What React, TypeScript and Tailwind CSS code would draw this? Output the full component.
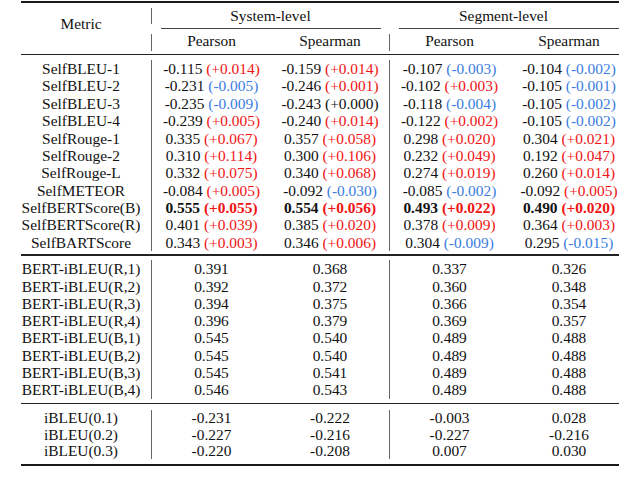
import React from 'react';

type Cell = string | [string, string];

const sectionOne: { name: string; bold?: boolean; cells: [string, string][] }[] = [
  { name: 'SelfBLEU-1', cells: [['-0.115', '+0.014'], ['-0.159', '+0.014'], ['-0.107', '-0.003'], ['-0.104', '-0.002']] },
  { name: 'SelfBLEU-2', cells: [['-0.231', '-0.005'], ['-0.246', '+0.001'], ['-0.102', '+0.003'], ['-0.105', '-0.001']] },
  { name: 'SelfBLEU-3', cells: [['-0.235', '-0.009'], ['-0.243', '+0.000'], ['-0.118', '-0.004'], ['-0.105', '-0.002']] },
  { name: 'SelfBLEU-4', cells: [['-0.239', '+0.005'], ['-0.240', '+0.014'], ['-0.122', '+0.002'], ['-0.105', '-0.002']] },
  { name: 'SelfRouge-1', cells: [['0.335', '+0.067'], ['0.357', '+0.058'], ['0.298', '+0.020'], ['0.304', '+0.021']] },
  { name: 'SelfRouge-2', cells: [['0.310', '+0.114'], ['0.300', '+0.106'], ['0.232', '+0.049'], ['0.192', '+0.047']] },
  { name: 'SelfRouge-L', cells: [['0.332', '+0.075'], ['0.340', '+0.068'], ['0.274', '+0.019'], ['0.260', '+0.014']] },
  { name: 'SelfMETEOR', cells: [['-0.084', '+0.005'], ['-0.092', '-0.030'], ['-0.085', '-0.002'], ['-0.092', '+0.005']] },
  { name: 'SelfBERTScore(B)', bold: true, cells: [['0.555', '+0.055'], ['0.554', '+0.056'], ['0.493', '+0.022'], ['0.490', '+0.020']] },
  { name: 'SelfBERTScore(R)', cells: [['0.401', '+0.039'], ['0.385', '+0.020'], ['0.378', '+0.009'], ['0.364', '+0.003']] },
  { name: 'SelfBARTScore', cells: [['0.343', '+0.003'], ['0.346', '+0.006'], ['0.304', '-0.009'], ['0.295', '-0.015']] },
];

const sectionTwo: [string, string[]][] = [
  ['BERT-iBLEU(R,1)', ['0.391', '0.368', '0.337', '0.326']],
  ['BERT-iBLEU(R,2)', ['0.392', '0.372', '0.360', '0.348']],
  ['BERT-iBLEU(R,3)', ['0.394', '0.375', '0.366', '0.354']],
  ['BERT-iBLEU(R,4)', ['0.396', '0.379', '0.369', '0.357']],
  ['BERT-iBLEU(B,1)', ['0.545', '0.540', '0.489', '0.488']],
  ['BERT-iBLEU(B,2)', ['0.545', '0.540', '0.489', '0.488']],
  ['BERT-iBLEU(B,3)', ['0.545', '0.541', '0.489', '0.488']],
  ['BERT-iBLEU(B,4)', ['0.546', '0.543', '0.489', '0.488']],
];

const sectionThree: [string, string[]][] = [
  ['iBLEU(0.1)', ['-0.231', '-0.222', '-0.003', '0.028']],
  ['iBLEU(0.2)', ['-0.227', '-0.216', '-0.227', '-0.216']],
  ['iBLEU(0.3)', ['-0.220', '-0.208', '0.007', '0.030']],
];

function Delta({ d }: { d: string }) {
  const color = d === '+0.000' ? 'text-[#111]' : d.startsWith('+') ? 'text-[#f01414]' : 'text-[#3b7de0]';
  return <span className={color}>({d})</span>;
}

function Row({ name, cells, h, bold }: { name: string; cells: Cell[]; h: string; bold?: boolean }) {
  const render = (c: Cell) =>
    typeof c === 'string' ? c : (
      <span className="whitespace-pre">
        {c[0] + ' '}
        <Delta d={c[1]} />
      </span>
    );
  const b = bold ? 'font-bold' : '';
  return (
    <div className={`flex ${h}`}>
      <div className="w-[131px] pr-[10px] border-r border-[#666] flex items-center justify-center whitespace-nowrap">{name}</div>
      <div className={`w-[119px] flex items-center justify-center whitespace-nowrap ${b}`}>{render(cells[0])}</div>
      <div className={`w-[119px] border-r border-[#666] flex items-center justify-center whitespace-nowrap ${b}`}>{render(cells[1])}</div>
      <div className={`w-[119px] flex items-center justify-center whitespace-nowrap ${b}`}>{render(cells[2])}</div>
      <div className={`w-[110px] pl-[10px] flex items-center justify-center whitespace-nowrap ${b}`}>{render(cells[3])}</div>
    </div>
  );
}

export default function App() {
  return (
    <div className="w-[640px] h-[486px] bg-white pt-[1px] pl-[21px] text-[15.4px] text-[#111]" style={{ fontFamily: '"Liberation Serif", "Times New Roman", serif' }}>
      <div className="w-[598px]">
        {/* top rule */}
        <div className="h-[2px] bg-[#1a1a1a]" />

        {/* Header */}
        <div className="flex h-[50.5px]">
          <div className="w-[130px] pr-[10px] pb-[10px] flex items-center justify-center">Metric</div>
          <div className="w-[1px] flex flex-col">
            <div className="h-[5px]" />
            <div className="h-[16px] bg-[#666]" />
            <div className="h-[10px]" />
            <div className="h-[17px] bg-[#666]" />
          </div>
          <div className="flex-1 flex flex-col">
            <div className="h-[24.5px] flex">
              <div className="w-[237px] flex items-center justify-center">System-level</div>
              <div className="w-[229px] flex items-center justify-center">Segment-level</div>
            </div>
            <div className="h-[1px] flex">
              <div className="ml-[9px] w-[220px] bg-[#444]" />
              <div className="ml-[18px] w-[220px] bg-[#444]" />
            </div>
            <div className="h-[25px] flex">
              <div className="w-[119px] flex items-center justify-center">Pearson</div>
              <div className="w-[118px] flex items-center justify-center">Spearman</div>
              <div className="w-[1px] flex flex-col">
                <div className="h-[5px]" />
                <div className="h-[17px] bg-[#666]" />
              </div>
              <div className="w-[119px] flex items-center justify-center">Pearson</div>
              <div className="w-[110px] pl-[10px] flex items-center justify-center">Spearman</div>
            </div>
          </div>
        </div>
        <div className="h-[1px] bg-[#222]" />

        {/* Self metrics */}
        <div className="pt-[5.5px] pb-[3.5px]">
          {sectionOne.map((r) => (
            <Row key={r.name} name={r.name} cells={r.cells} bold={r.bold} h="h-[17.36px]" />
          ))}
        </div>
        <div className="h-[1.2px] bg-[#222]" />

        {/* BERT-iBLEU */}
        <div className="pt-[4.5px] pb-[4.4px]">
          {sectionTwo.map(([n, c]) => (
            <Row key={n} name={n} cells={c} h="h-[17.3px]" />
          ))}
        </div>
        <div className="h-[1.2px] bg-[#222]" />

        {/* iBLEU */}
        <div className="pt-[5.7px] pb-[5.5px]">
          {sectionThree.map(([n, c]) => (
            <Row key={n} name={n} cells={c} h="h-[16.33px]" />
          ))}
        </div>
        <div className="h-[2px] bg-[#1a1a1a]" />
      </div>
    </div>
  );
}
